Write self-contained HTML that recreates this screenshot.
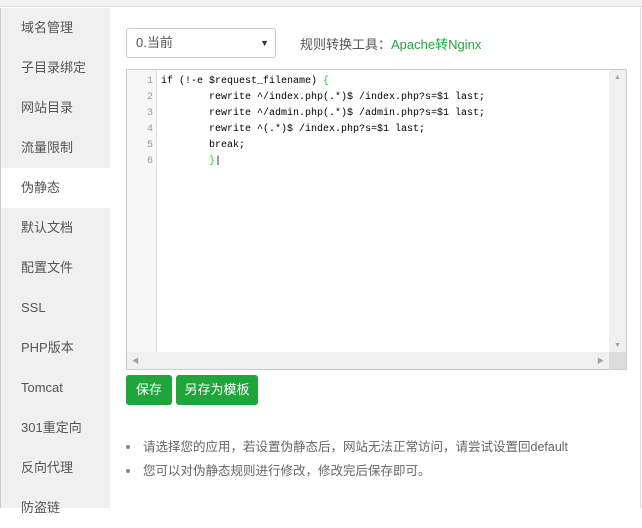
<!DOCTYPE html>
<html><head><meta charset="utf-8"><style>
*{margin:0;padding:0;box-sizing:border-box}
body{width:642px;height:508px;overflow:hidden;background:#fff;font-family:"Liberation Sans","Noto Sans CJK SC",sans-serif;position:relative}
.top{position:absolute;left:0;top:0;width:642px;height:7px;background:#f2f2f2;border-bottom:1px solid #e4e4e4}
.side{position:absolute;left:0;top:8px;width:110px;height:500px;background:#f0f0f0;border-left:1px solid #ccc}
.side div{height:40px;line-height:40px;padding-left:20px;font-size:13px;color:#555}
.side div.act{background:#fff}
.rline{position:absolute;right:1px;top:7px;width:1px;height:501px;background:#ddd}
.sel{position:absolute;left:126px;top:28px;width:150px;height:30px;border:1px solid #ccc;border-radius:3px;font-size:13px;color:#555;line-height:28px;padding-left:9px}
.sel span{position:absolute;right:6px;top:0;font-size:9px;color:#333}
.tool{position:absolute;left:300px;top:34px;font-size:13px;color:#555}
.tool a{color:#20a53a}
.ed{position:absolute;left:126px;top:69px;width:501px;height:301px;border:1px solid #ccc;background:#fff}
.gut{position:absolute;left:0;top:0;width:30px;height:283px;background:#f7f7f7;border-right:1px solid #ddd;padding-top:4px}
.gut div,.code div{height:16px;line-height:16px;font-family:"Liberation Mono",monospace;font-size:10px}
.gut div{text-align:right;padding-right:3px;color:#999}
.code{position:absolute;left:34px;top:4px;color:#000;white-space:pre}
.vs{position:absolute;right:0;top:0;width:17px;height:283px;background:#f0f0f0}
.hs{position:absolute;left:0;bottom:0;width:482px;height:17px;background:#f0f0f0}
.cr{position:absolute;right:0;bottom:0;width:17px;height:17px;background:#dcdcdc}
.ar{position:absolute;font-size:7px;color:#a0a0a0}
.btn{position:absolute;top:375px;height:30px;line-height:30px;background:#20a53a;color:#fff;font-size:13px;border-radius:3px;text-align:center}
ul{position:absolute;left:125px;top:437px;list-style:none;font-size:12.5px;color:#666}
ul li{height:24px;line-height:20px;position:relative;padding-left:18px}
ul li:before{content:"";position:absolute;left:1px;top:8px;width:4px;height:4px;border-radius:50%;background:#888}
</style></head><body>
<div class="top"></div>
<div class="side">
<div>域名管理</div><div>子目录绑定</div><div>网站目录</div><div>流量限制</div><div class="act">伪静态</div><div>默认文档</div><div>配置文件</div><div>SSL</div><div>PHP版本</div><div>Tomcat</div><div>301重定向</div><div>反向代理</div><div>防盗链</div>
</div>
<div class="rline"></div>
<div class="sel">0.当前<span>▼</span></div>
<div class="tool">规则转换工具：<a>Apache转Nginx</a></div>
<div class="ed">
<div class="gut"><div>1</div><div>2</div><div>3</div><div>4</div><div>5</div><div>6</div></div>
<div class="code"><div>if (!-e $request_filename) <span style="color:#2c2">{</span></div><div>        rewrite ^/index.php(.*)$ /index.php?s=$1 last;</div><div>        rewrite ^/admin.php(.*)$ /admin.php?s=$1 last;</div><div>        rewrite ^(.*)$ /index.php?s=$1 last;</div><div>        break;</div><div>        <span style="color:#2c2">}</span>|</div></div>
<div class="vs"><span class="ar" style="left:5px;top:4px">▲</span><span class="ar" style="left:5px;bottom:4px">▼</span></div>
<div class="hs"><span class="ar" style="left:5px;top:4px">◀</span><span class="ar" style="right:5px;top:4px">▶</span></div>
<div class="cr"></div>
</div>
<div class="btn" style="left:126px;width:46px">保存</div>
<div class="btn" style="left:176px;width:82px">另存为模板</div>
<ul><li>请选择您的应用，若设置伪静态后，网站无法正常访问，请尝试设置回default</li><li>您可以对伪静态规则进行修改，修改完后保存即可。</li></ul>
</body></html>
